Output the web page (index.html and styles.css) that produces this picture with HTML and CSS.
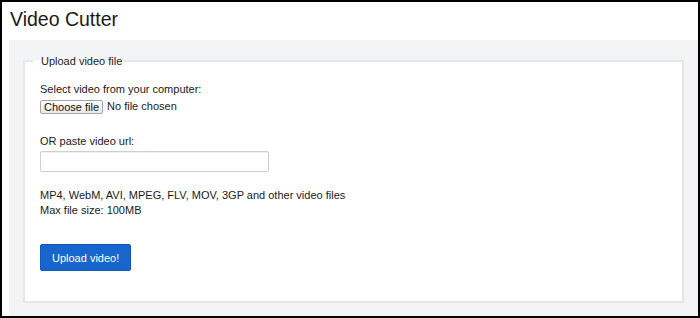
FILE: index.html
```html
<!DOCTYPE html>
<html lang="en">
<head>
  <meta charset="UTF-8" />
  <meta name="viewport" content="width=device-width, initial-scale=1.0"/>
  <title>Video Cutter</title>
  <link rel="stylesheet" href="styles.css">
</head>
<body>
  <div class="frame">
    <h1>Video Cutter</h1>
    <div class="panel">
      <form id="upload-form">
        <fieldset>
          <legend>Upload video file</legend>

          <p class="label">Select video from your computer:</p>
          <div class="file-row">
            <label class="file-btn" for="video-file">Choose file</label>
            <span id="file-name">No file chosen</span>
            <input type="file" id="video-file" accept="video/*" />
          </div>

          <p class="label or-label">OR paste video url:</p>
          <input type="text" id="video-url" class="url-input" />

          <p class="info">MP4, WebM, AVI, MPEG, FLV, MOV, 3GP and other video files<br>Max file size: 100MB</p>

          <button type="submit" class="upload-btn">Upload video!</button>
        </fieldset>
      </form>
    </div>
  </div>

  <script>
    const fileInput = document.getElementById("video-file");
    const fileName = document.getElementById("file-name");

    fileInput.addEventListener("change", function() {
      fileName.textContent = fileInput.files.length ? fileInput.files[0].name : "No file chosen";
    });

    document.getElementById("upload-form").addEventListener("submit", function(e) {
      e.preventDefault();
    });
  </script>
</body>
</html>
```

FILE: styles.css
```css
body {
  margin: 0;
  font-family: 'Liberation Sans', Arial, sans-serif;
  color: #1a1a1a;
  background: #fff;
}

.frame {
  height: 318px;
  box-sizing: border-box;
  border: 2px solid #000;
  display: flex;
  flex-direction: column;
}

h1 {
  margin: 0 0 9px 8px;
  padding-top: 5px;
  font-size: 19.5px;
  line-height: 24px;
  font-weight: normal;
}

.panel {
  flex: 1;
  margin-left: 7px;
  background: #f3f4f6;
  padding: 12px 14px 13px 14px;
}

fieldset {
  margin: 0;
  height: 100%;
  box-sizing: border-box;
  background: #fff;
  border: 2px solid #e6e6e6;
  padding: 0 15px 30px 15px;
  font-size: 11px;
  line-height: 15px;
}

legend {
  margin-left: -7px;
  padding: 2px 1px 0 8px;
  font-size: 11px;
  line-height: 15px;
}

p {
  margin: 0;
}

.label {
  margin-top: 13px;
}

.file-row {
  display: flex;
  align-items: center;
  gap: 4px;
  margin-top: 2px;
}

.file-row input {
  display: none;
}

.file-btn {
  display: inline-block;
  height: 14px;
  line-height: 12px;
  padding: 0 3px;
  box-sizing: border-box;
  border: 1px solid #a6a6a6;
  border-radius: 2px;
  background: linear-gradient(#fdfdfd, #e9e9e9);
  font-size: 11px;
  color: #111;
  cursor: pointer;
}

.or-label {
  margin-top: 20px;
}

.url-input {
  display: block;
  width: 229px;
  height: 21px;
  box-sizing: border-box;
  margin-top: 2px;
  border: 1px solid #cfcfcf;
  border-radius: 2px;
  box-shadow: inset 0 1px 1px rgba(0, 0, 0, 0.06);
  font-size: 11px;
}

.info {
  margin-top: 16px;
}

.upload-btn {
  display: block;
  margin-top: 26px;
  height: 27px;
  padding: 0 11px;
  background: #1766ce;
  border: 1px solid #1259b9;
  border-radius: 2px;
  color: #fff;
  font-family: 'Liberation Sans', Arial, sans-serif;
  font-size: 11px;
  cursor: pointer;
}

.upload-btn:hover {
  background: #1258b8;
}
```
